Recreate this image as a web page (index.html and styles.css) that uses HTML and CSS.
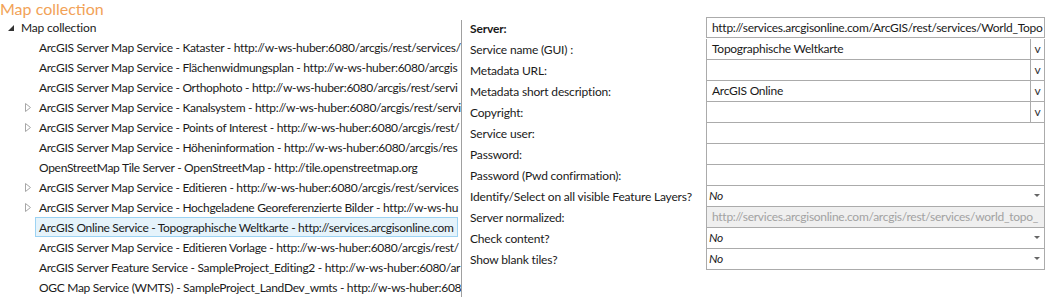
FILE: index.html
```html
<!DOCTYPE html>
<html lang="en">
<head>
    <meta charset="UTF-8">
    <title>Map collection</title>
    <link rel="stylesheet" href="styles.css">
</head>
<body>
    <div class="title">Map collection</div>

    <div class="main">
        <!-- Tree of map services -->
        <div class="tree">
            <div class="node root">
                <svg class="exp" width="6" height="6" viewBox="0 0 6 6"><polygon points="6,0 6,6 0,6" fill="#333"/></svg>
                <span>Map collection</span>
            </div>
            <div class="node"><span>ArcGIS Server Map Service - Kataster - http://w-ws-huber:6080/arcgis/rest/services/</span></div>
            <div class="node"><span>ArcGIS Server Map Service - Flächenwidmungsplan - http://w-ws-huber:6080/arcgis</span></div>
            <div class="node"><span>ArcGIS Server Map Service - Orthophoto - http://w-ws-huber:6080/arcgis/rest/servi</span></div>
            <div class="node">
                <svg class="exp" width="6" height="9" viewBox="0 0 6 9"><polygon points="0.5,0.5 5.5,4.5 0.5,8.5" fill="none" stroke="#a6a6a6"/></svg>
                <span>ArcGIS Server Map Service - Kanalsystem - http://w-ws-huber:6080/arcgis/rest/servi</span>
            </div>
            <div class="node">
                <svg class="exp" width="6" height="9" viewBox="0 0 6 9"><polygon points="0.5,0.5 5.5,4.5 0.5,8.5" fill="none" stroke="#a6a6a6"/></svg>
                <span>ArcGIS Server Map Service - Points of Interest - http://w-ws-huber:6080/arcgis/rest/</span>
            </div>
            <div class="node"><span>ArcGIS Server Map Service - Höheninformation - http://w-ws-huber:6080/arcgis/res</span></div>
            <div class="node"><span>OpenStreetMap Tile Server - OpenStreetMap - http://tile.openstreetmap.org</span></div>
            <div class="node">
                <svg class="exp" width="6" height="9" viewBox="0 0 6 9"><polygon points="0.5,0.5 5.5,4.5 0.5,8.5" fill="none" stroke="#a6a6a6"/></svg>
                <span>ArcGIS Server Map Service - Editieren - http://w-ws-huber:6080/arcgis/rest/services</span>
            </div>
            <div class="node">
                <svg class="exp" width="6" height="9" viewBox="0 0 6 9"><polygon points="0.5,0.5 5.5,4.5 0.5,8.5" fill="none" stroke="#a6a6a6"/></svg>
                <span>ArcGIS Server Map Service - Hochgeladene Georeferenzierte Bilder - http://w-ws-hu</span>
            </div>
            <div class="node selected"><span>ArcGIS Online Service - Topographische Weltkarte - http://services.arcgisonline.com</span></div>
            <div class="node"><span>ArcGIS Server Map Service - Editieren Vorlage - http://w-ws-huber:6080/arcgis/rest/</span></div>
            <div class="node"><span>ArcGIS Server Feature Service - SampleProject_Editing2 - http://w-ws-huber:6080/ar</span></div>
            <div class="node"><span>OGC Map Service (WMTS) - SampleProject_LandDev_wmts - http://w-ws-huber:608</span></div>
        </div>

        <!-- Property grid -->
        <div class="props">
            <div class="prop">
                <div class="label bold">Server:</div>
                <div class="value first"><span class="text">http://services.arcgisonline.com/ArcGIS/rest/services/World_Topo</span></div>
            </div>
            <div class="prop">
                <div class="label">Service name (GUI) :</div>
                <div class="value"><span class="text">Topographische Weltkarte</span><span class="btn">v</span></div>
            </div>
            <div class="prop">
                <div class="label">Metadata URL:</div>
                <div class="value"><span class="text"></span><span class="btn">v</span></div>
            </div>
            <div class="prop">
                <div class="label">Metadata short description:</div>
                <div class="value"><span class="text">ArcGIS Online</span><span class="btn">v</span></div>
            </div>
            <div class="prop">
                <div class="label">Copyright:</div>
                <div class="value"><span class="text"></span><span class="btn">v</span></div>
            </div>
            <div class="prop">
                <div class="label">Service user:</div>
                <div class="value"><span class="text"></span></div>
            </div>
            <div class="prop">
                <div class="label">Password:</div>
                <div class="value"><span class="text"></span></div>
            </div>
            <div class="prop">
                <div class="label">Password (Pwd confirmation):</div>
                <div class="value"><span class="text"></span></div>
            </div>
            <div class="prop">
                <div class="label">Identify/Select on all visible Feature Layers?</div>
                <div class="value combo"><span class="text">No</span><span class="arrow"></span></div>
            </div>
            <div class="prop">
                <div class="label">Server normalized:</div>
                <div class="value readonly"><span class="text">http://services.arcgisonline.com/arcgis/rest/services/world_topo_</span></div>
            </div>
            <div class="prop">
                <div class="label">Check content?</div>
                <div class="value combo"><span class="text">No</span><span class="arrow"></span></div>
            </div>
            <div class="prop">
                <div class="label">Show blank tiles?</div>
                <div class="value combo"><span class="text">No</span><span class="arrow"></span></div>
            </div>
        </div>
    </div>
</body>
</html>
```

FILE: styles.css
```css
body {
    margin: 0;
    font-family: "Segoe UI", Lato, "Noto Sans", sans-serif;
    font-size: 12px;
    letter-spacing: -0.17px;
    color: #1a1a1a;
    background: #fff;
}
.title {
    height: 17px;
    line-height: 18px;
    font-size: 16px;
    letter-spacing: 0;
    color: #f2a257;
    white-space: nowrap;
}
.main {
    display: flex;
}

/* tree */
.tree {
    width: 461px;
    border-right: 1px solid #a0a0a0;
    margin-top: 3px;
    flex-shrink: 0;
    overflow: hidden;
    letter-spacing: -0.3px;
}
.node {
    display: flex;
    align-items: center;
    height: 20px;
    padding-left: 39px;
    position: relative;
    white-space: nowrap;
    box-sizing: border-box;
}
.tree > .node:first-child {
    margin-top: -3px;
}
.node .exp {
    position: absolute;
    left: 25px;
    top: 6px;
}
.node.root {
    padding-left: 21px;
    letter-spacing: -0.17px;
}
.node.root .exp {
    left: 8px;
    top: 8px;
}
.node.selected {
    margin-left: 35px;
    margin-right: 3px;
    padding-left: 3px;
    background: #e5f3fb;
    border: 1px solid #9dd3f3;
}

/* property grid */
.props {
    padding-left: 8px;
    margin-top: 1px;
    flex-shrink: 0;
}
.prop {
    display: flex;
    height: 21px;
}
.label {
    width: 236px;
    line-height: 21px;
    white-space: nowrap;
}
.label.bold {
    font-weight: bold;
}
.value {
    width: 339px;
    box-sizing: border-box;
    border: 1px solid #ababab;
    border-top: none;
    display: flex;
    overflow: hidden;
}
.value.first {
    border-top: 1px solid #ababab;
    height: 21px;
    margin-top: -1px;
}
.value .text {
    flex: 1;
    padding-left: 5px;
    line-height: 20px;
    white-space: nowrap;
    overflow: hidden;
    letter-spacing: -0.27px;
}
.value .btn {
    width: 13px;
    border-left: 1px solid #ababab;
    text-align: center;
    line-height: 19px;
    color: #333;
}
.value.combo .text {
    font-style: italic;
    padding-left: 2px;
}
.value .arrow {
    width: 0;
    height: 0;
    margin: 8px 4px 0 0;
    border-left: 3px solid transparent;
    border-right: 3px solid transparent;
    border-top: 3px solid #666;
}
.value.readonly {
    background: #efefef;
}
.value.readonly .text {
    color: #a2a2a2;
}
```
